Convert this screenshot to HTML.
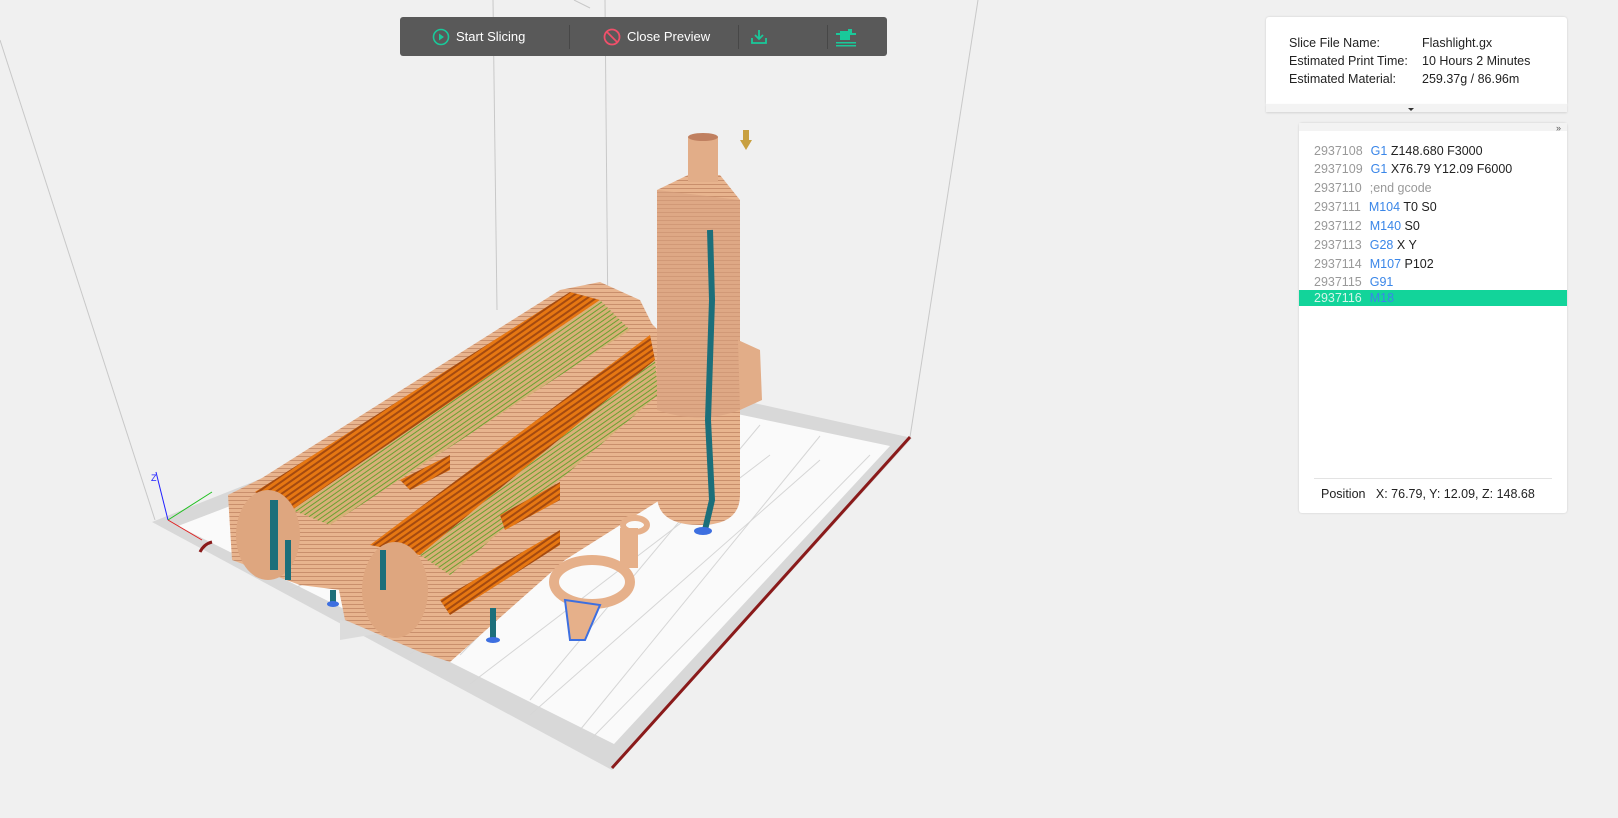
<!DOCTYPE html>
<html><head><meta charset="utf-8"><style>
body{margin:0;width:1618px;height:818px;background:#f0f0f0;overflow:hidden;font-family:"Liberation Sans","Noto Sans CJK SC",sans-serif;position:relative}
.tb{position:absolute;left:400px;top:17px;width:487px;height:39px;background:#595959;border-radius:3px;color:#fff;font-size:13px}
.tb .it{position:absolute;top:0;height:39px;display:flex;align-items:center}
.tb .sep{position:absolute;top:8px;width:1px;height:24px;background:#474747}
.info{position:absolute;left:1266px;top:17px;width:301px;height:87px;background:#fff;border-radius:3px 3px 0 0;box-shadow:0 0 2px rgba(0,0,0,.15);font-size:12.5px;color:#222}
.row{position:absolute;left:23px}
.gc{position:absolute;left:1299px;top:123px;width:268px;height:390px;background:#fff;border-radius:3px;box-shadow:0 0 2px rgba(0,0,0,.15);font-size:12.5px}
.gc .ln{position:absolute;left:15px;height:18px;line-height:18px;color:#222;white-space:nowrap}
.n{color:#999;margin-right:8px}.k{color:#3a86e8}
</style></head><body>
<svg width="1618" height="818" style="position:absolute;left:0;top:0">
<defs>
<pattern id="tan" width="4" height="4" patternUnits="userSpaceOnUse"><rect width="4" height="4" fill="#e8b48e"/><rect width="4" height="1" fill="#c98f6c"/></pattern>
<pattern id="or" width="5" height="5" patternUnits="userSpaceOnUse" patternTransform="rotate(-35)"><rect width="5" height="5" fill="#e67712"/><rect width="5" height="2" fill="#a44a10"/></pattern>
<pattern id="gr" width="4" height="4" patternUnits="userSpaceOnUse" patternTransform="rotate(-35)"><rect width="4" height="4" fill="#d8b078"/><rect width="4" height="1" fill="#6aa030"/></pattern>
</defs>
<g stroke="#c8c8c8" stroke-width="1" fill="none">
<line x1="0" y1="40" x2="155" y2="520"/><line x1="493" y1="0" x2="497" y2="310"/>
<line x1="605" y1="0" x2="612" y2="768"/><line x1="978" y1="0" x2="910" y2="437"/>
<line x1="574" y1="0" x2="590" y2="8"/>
</g>
<polygon points="152,522 560,360 912,438 612,770" fill="#d8d8d8"/>
<polygon points="178,526 565,378 890,446 614,744" fill="#fafafa"/>
<g stroke="#d6d6d6" stroke-width="1">
<line x1="230" y1="558" x2="616" y2="418"/><line x1="290" y1="590" x2="650" y2="430"/><line x1="350" y1="622" x2="690" y2="440"/><line x1="410" y1="654" x2="730" y2="448"/><line x1="470" y1="684" x2="770" y2="455"/><line x1="530" y1="715" x2="820" y2="460"/><line x1="590" y1="740" x2="870" y2="455"/>
<line x1="580" y1="392" x2="300" y2="560"/><line x1="640" y1="400" x2="380" y2="610"/><line x1="700" y1="412" x2="460" y2="655"/><line x1="760" y1="425" x2="530" y2="700"/><line x1="820" y1="436" x2="580" y2="730"/>
</g>
<polyline points="612,768 910,437" stroke="#8a1a1a" stroke-width="3" fill="none"/>
<path d="M200,552 q4,-8 12,-10" stroke="#8a1a1a" stroke-width="3" fill="none"/>
<line x1="168" y1="520" x2="156" y2="472" stroke="#2020ff"/><line x1="168" y1="520" x2="212" y2="492" stroke="#20c020"/><line x1="168" y1="520" x2="202" y2="540" stroke="#e02020"/>
<text x="151" y="481" font-size="9" fill="#2020ff" font-family="Liberation Sans">Z</text>
<polygon points="340,620 340,640 400,630" fill="#dcdcdc"/>
<polygon points="228,495 262,478 560,290 600,282 640,300 660,340 655,420 340,590 300,585 232,560" fill="url(#tan)"/>
<polygon points="255,492 570,292 600,300 292,510" fill="url(#or)"/>
<polygon points="292,510 600,300 630,330 330,525" fill="url(#gr)"/>
<polygon points="340,548 385,520 650,322 660,332 660,500 565,560 450,662 420,652 345,620 338,585" fill="url(#tan)"/>
<polygon points="370,545 650,335 655,360 420,555" fill="url(#or)"/>
<polygon points="420,555 655,360 658,395 450,575" fill="url(#gr)"/>
<ellipse cx="268" cy="535" rx="32" ry="45" fill="#dea67f"/><ellipse cx="395" cy="590" rx="33" ry="48" fill="#dea67f"/>
<polygon points="400,480 450,455 450,470 410,490" fill="url(#or)"/><polygon points="500,515 560,482 560,500 505,530" fill="url(#or)"/>
<polygon points="440,600 560,530 560,545 450,615" fill="url(#or)"/>
<path d="M657,190 L688,175 L720,175 L740,200 L740,495 Q740,525 700,525 Q657,525 657,495Z" fill="url(#tan)"/>
<path d="M657,190 L740,200 L740,410 Q700,425 657,410Z" fill="#d7a07f" opacity=".6"/>
<rect x="688" y="137" width="30" height="45" fill="#e2ad88"/><ellipse cx="703" cy="137" rx="15" ry="4" fill="#c08060"/>
<path d="M710,230 L712,300 L708,420 L712,500 L705,530" stroke="#1c6f7a" stroke-width="6" fill="none"/>
<polygon points="738,340 760,350 762,400 740,410" fill="#e2ad88"/>
<ellipse cx="592" cy="582" rx="38" ry="22" fill="none" stroke="#e6b08a" stroke-width="10"/>
<path d="M565,600 L600,605 L585,640 L570,640Z" fill="#e6b08a" stroke="#3d6fe0" stroke-width="2"/>
<ellipse cx="635" cy="525" rx="12" ry="7" fill="none" stroke="#e6b08a" stroke-width="6"/>
<rect x="620" y="528" width="18" height="40" fill="#e6b08a"/>
<g fill="#1c6f7a"><rect x="270" y="500" width="8" height="70"/><rect x="285" y="540" width="6" height="40"/><rect x="330" y="590" width="6" height="12"/><rect x="490" y="608" width="6" height="30"/><rect x="380" y="550" width="6" height="40"/></g>
<g fill="#3d6fe0"><ellipse cx="333" cy="604" rx="6" ry="3"/><ellipse cx="493" cy="640" rx="7" ry="3"/><ellipse cx="703" cy="531" rx="9" ry="4"/></g>
<path d="M743,130 h6 v10 h3 l-6,10 l-6,-10 h3z" fill="#c8a040"/>
</svg>
<div class="tb">
<div class="it" style="left:32px"><svg width="18" height="18" style="margin-right:6px"><circle cx="9" cy="9" r="7.5" fill="none" stroke="#19c99a" stroke-width="1.6"/><path d="M7,5.5 L12,9 L7,12.5Z" fill="#19c99a"/></svg>Start Slicing</div>
<div class="sep" style="left:169px"></div>
<div class="it" style="left:203px"><svg width="18" height="18" style="margin-right:6px"><circle cx="9" cy="9" r="7.5" fill="none" stroke="#f0506a" stroke-width="1.8"/><line x1="4" y1="4" x2="14" y2="14" stroke="#f0506a" stroke-width="1.8"/></svg>Close Preview</div>
<div class="sep" style="left:338px"></div>
<div class="it" style="left:349px"><svg width="20" height="18"><path d="M10,2 V11 M6,7 L10,11 L14,7 M3,10 V15 H17 V10" stroke="#19c99a" stroke-width="1.8" fill="none"/></svg></div>
<div class="sep" style="left:427px"></div>
<div class="it" style="left:434px"><svg width="24" height="22"><rect x="6" y="5" width="10" height="9" fill="#19c99a"/><rect x="2" y="7" width="20" height="2" fill="#19c99a"/><rect x="14" y="3" width="4" height="4" fill="#19c99a"/><rect x="2" y="16" width="20" height="1.5" fill="#19c99a"/><rect x="2" y="19" width="20" height="1.5" fill="#19c99a"/></svg></div>
</div>
<div class="info">
<div class="row" style="top:19px">Slice File Name:</div><div class="row" style="top:19px;left:156px">Flashlight.gx</div>
<div class="row" style="top:37px">Estimated Print Time:</div><div class="row" style="top:37px;left:156px">10 Hours 2 Minutes</div>
<div class="row" style="top:55px">Estimated Material:</div><div class="row" style="top:55px;left:156px">259.37g / 86.96m</div>
</div>
<div style="position:absolute;left:1266px;top:104px;width:301px;height:8px;background:#f3f3f3;box-shadow:0 1px 2px rgba(0,0,0,.12)"></div>
<div style="position:absolute;left:1408px;top:108px;width:0;height:0;border-left:3px solid transparent;border-right:3px solid transparent;border-top:3px solid #333"></div>
<div class="gc">
<div style="position:absolute;left:0;top:0;width:268px;height:8px;background:#f3f3f3"></div>
<div style="position:absolute;right:6px;top:0;font-size:9px;color:#555">»</div>
<div class="ln" style="top:19px"><span class="n">2937108</span><span class="k">G1</span> Z148.680 F3000</div>
<div class="ln" style="top:37px"><span class="n">2937109</span><span class="k">G1</span> X76.79 Y12.09 F6000</div>
<div class="ln" style="top:56px;color:#999"><span class="n">2937110</span>;end gcode</div>
<div class="ln" style="top:75px"><span class="n">2937111</span><span class="k">M104</span> T0 S0</div>
<div class="ln" style="top:94px"><span class="n">2937112</span><span class="k">M140</span> S0</div>
<div class="ln" style="top:113px"><span class="n">2937113</span><span class="k">G28</span> X Y</div>
<div class="ln" style="top:132px"><span class="n">2937114</span><span class="k">M107</span> P102</div>
<div class="ln" style="top:150px"><span class="n">2937115</span><span class="k">G91</span></div>
<div style="position:absolute;left:0;top:167px;width:268px;height:16px;background:#12d49a"></div>
<div class="ln" style="top:166px"><span class="n" style="color:#d6f5ea">2937116</span><span class="k">M18</span></div>
<div style="position:absolute;left:15px;top:355px;width:238px;height:1px;background:#e3e3e3"></div>
<div class="ln" style="top:362px;left:22px">Position&nbsp;&nbsp;&nbsp;X: 76.79, Y: 12.09, Z: 148.68</div>
</div>
</body></html>
